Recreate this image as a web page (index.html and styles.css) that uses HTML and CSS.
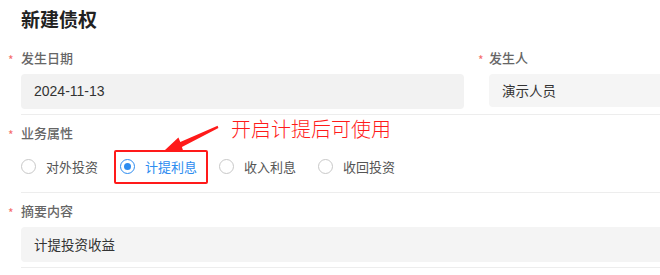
FILE: index.html
```html
<!DOCTYPE html>
<html lang="zh-CN">
<head>
<meta charset="utf-8">
<link rel="stylesheet" href="styles.css">
</head>
<body>
<div class="page">
  <h1 class="title">新建债权</h1>

  <div class="row two-col">
    <div class="field field-left">
      <div class="label"><span class="req">*</span>发生日期</div>
      <div class="input input-date">2024-11-13</div>
    </div>
    <div class="field field-right">
      <div class="label"><span class="req">*</span>发生人</div>
      <div class="input input-person">演示人员</div>
    </div>
  </div>

  <div class="row">
    <div class="field">
      <div class="label"><span class="req">*</span>业务属性</div>
      <div class="radios">
        <label class="radio"><span class="dot"></span>对外投资</label>
        <label class="radio checked"><span class="dot"></span>计提利息</label>
        <label class="radio"><span class="dot"></span>收入利息</label>
        <label class="radio"><span class="dot"></span>收回投资</label>
      </div>
    </div>
  </div>

  <div class="row">
    <div class="field">
      <div class="label"><span class="req">*</span>摘要内容</div>
      <div class="input input-wide">计提投资收益</div>
    </div>
  </div>

  <div class="anno-box"></div>
  <svg class="anno-arrow" width="70" height="40" viewBox="0 0 70 40">
    <path d="M5 30 L23.4 31.6 L21.9 26.9 L58.4 8 L57.6 5.8 L20.3 22.1 L18.4 17.4 Z" fill="#ff1a1a"/>
  </svg>
  <div class="anno-text">开启计提后可使用</div>
</div>
</body>
</html>
```

FILE: styles.css
```css
* { box-sizing: border-box; }
html, body { margin: 0; padding: 0; background: #fff; }
body {
  font-family: "Noto Sans CJK SC", "Noto Sans", sans-serif;
  color: #333;
  width: 660px;
  height: 275px;
  overflow: hidden;
}
.page {
  position: relative;
  padding: 0 0 0 8px;
}
.title {
  margin: 0;
  padding: 6px 0 0 13px;
  height: 47px;
  font-size: 19px;
  line-height: 26px;
  font-weight: 700;
  color: #222;
}
.row {
  border-bottom: 1px solid #ededed;
  margin-left: 13px;
  padding-bottom: 5px;
  margin-bottom: 7px;
}
.two-col {
  display: flex;
  gap: 25px;
}
.field-left { width: 443px; flex: none; }
.field-right { flex: 1; }
.field-right .label { margin-left: -11px; }
.field-right .req { width: 11px; }
.label {
  display: flex;
  align-items: center;
  height: 21px;
  margin-left: -13px;
  font-size: 13px;
  font-weight: 500;
  color: #666;
  margin-bottom: 6px;
}
.req {
  width: 13px;
  color: #f56c6c;
  font-size: 12px;
  font-weight: 400;
  padding-top: 3px;
}
.input {
  height: 35px;
  border-radius: 4px;
  background: #f2f2f2;
  font-size: 13.5px;
  line-height: 35px;
  padding-left: 13px;
  color: #333;
}
.input-date {
  font-family: "Liberation Sans", "Noto Sans CJK SC", sans-serif;
  font-size: 14px;
}
.input-person {
  height: 33px;
  line-height: 33px;
  background: #f5f5f5;
  margin-right: -20px;
}
.input-wide {
  margin-right: -20px;
  background: #f4f4f4;
}
.radios {
  display: flex;
  align-items: center;
  height: 34px;
  margin-bottom: 4px;
}
.radio {
  display: flex;
  align-items: center;
  font-size: 13px;
  color: #555;
  margin-right: 22px;
}
.radio .dot {
  width: 15px;
  height: 15px;
  border: 1px solid #c8c8c8;
  border-radius: 50%;
  margin-right: 10px;
  display: flex;
  align-items: center;
  justify-content: center;
}
.radio.checked { color: #2d8cf0; }
.radio.checked .dot { border-color: #2d8cf0; }
.radio.checked .dot::after {
  content: "";
  width: 7px;
  height: 7px;
  border-radius: 50%;
  background: #2d8cf0;
}
.anno-box {
  position: absolute;
  left: 114px;
  top: 150px;
  width: 94px;
  height: 34px;
  border: 2.5px solid #ff1a1a;
  border-radius: 2px;
}
.anno-arrow {
  position: absolute;
  left: 160px;
  top: 120px;
}
.anno-text {
  position: absolute;
  left: 231px;
  top: 115px;
  font-size: 20px;
  line-height: 28px;
  color: #ff1a1a;
  font-family: "Noto Sans CJK SC", sans-serif;
  font-weight: 300;
}
```
